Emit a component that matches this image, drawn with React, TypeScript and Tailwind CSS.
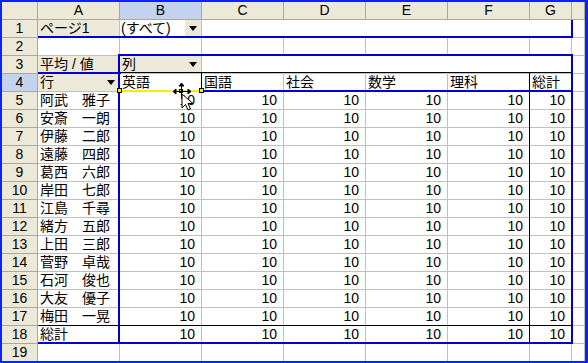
import React from "react";

const GRID = "border-r border-b border-[#c0c0c0]";
const CELL = "h-[18px] overflow-hidden whitespace-nowrap leading-[17px] text-[14px] flex items-center";

const names = [
  "阿武　雅子",
  "安斎　一朗",
  "伊藤　二郎",
  "遠藤　四郎",
  "葛西　六郎",
  "岸田　七郎",
  "江島　千尋",
  "緒方　五郎",
  "上田　三郎",
  "菅野　卓哉",
  "石河　俊也",
  "大友　優子",
  "梅田　一晃",
  "総計",
];

function Drop() {
  return (
    <span className="ml-auto w-[16px] h-[17px] bg-[#ece9d8] flex items-center justify-center shrink-0">
      <span className="w-0 h-0 border-l-[4px] border-r-[4px] border-t-[5px] border-l-transparent border-r-transparent border-t-black" />
    </span>
  );
}

function RowHead({ n, sel }: { n: number; sel?: boolean }) {
  return (
    <div
      className={`${CELL} justify-center border-r border-b border-[#aca899] ${
        sel ? "bg-[#c3d3ef]" : "bg-[#ece9d8]"
      }`}
    >
      {n}
    </div>
  );
}

function Num() {
  return <div className={`${CELL} ${GRID} justify-end pr-[6px]`}>10</div>;
}

export default function App() {
  const cols = ["A", "B", "C", "D", "E", "F", "G", ""];
  return (
    <div className="w-[588px] h-[363px] overflow-hidden bg-white border-l-2 border-t-2 border-r-[3px] border-b-2 border-[#0b24f0] text-black font-[family-name:'Liberation_Sans','Noto_Sans_CJK_JP',sans-serif]">
      <div className="relative grid grid-cols-[36px_82px_82px_82px_82px_82px_82px_42px_1fr] grid-rows-[repeat(20,18px)]">
        {/* header */}
        <div className={`${CELL} bg-[#ece9d8] border-r border-b border-[#aca899]`} />
        {cols.map((c, i) => (
          <div
            key={i}
            className={`${CELL} justify-center border-r border-b border-[#aca899] ${
              c === "B" ? "bg-[#c3d3ef]" : "bg-[#ece9d8]"
            }`}
          >
            {c}
          </div>
        ))}

        {/* row 1 */}
        <RowHead n={1} />
        <div className={`${CELL} ${GRID} bg-[#ece9d8] pl-[2px]`}>ページ1</div>
        <div className={`${CELL} ${GRID} pl-[1px]`}>
          <span>(すべて)</span>
          <Drop />
        </div>
        <div className={`${CELL} ${GRID} border-r-white`} />
        <div className={`${CELL} ${GRID} border-r-white`} />
        <div className={`${CELL} ${GRID} border-r-white`} />
        <div className={`${CELL} ${GRID} border-r-white`} />
        <div className={`${CELL} ${GRID}`} />
        <div className={`${CELL} ${GRID}`} />

        {/* row 2 */}
        <RowHead n={2} />
        {cols.map((_, i) => (
          <div key={i} className={`${CELL} ${GRID}`} />
        ))}

        {/* row 3 */}
        <RowHead n={3} />
        <div className={`${CELL} ${GRID} bg-[#ece9d8] pl-[2px]`}>平均 / 値</div>
        <div className={`${CELL} ${GRID} bg-[#ece9d8] pl-[2px]`}>
          <span>列</span>
          <Drop />
        </div>
        <div className={`${CELL} ${GRID} border-r-white`} />
        <div className={`${CELL} ${GRID} border-r-white`} />
        <div className={`${CELL} ${GRID} border-r-white`} />
        <div className={`${CELL} ${GRID} border-r-white`} />
        <div className={`${CELL} ${GRID}`} />
        <div className={`${CELL} ${GRID}`} />

        {/* row 4 */}
        <RowHead n={4} sel />
        <div className={`${CELL} ${GRID} bg-[#ece9d8] pl-[2px]`}>
          <span>行</span>
          <Drop />
        </div>
        <div className={`${CELL} ${GRID} pl-[2px]`}>英語</div>
        <div className={`${CELL} ${GRID} pl-[2px]`}>国語</div>
        <div className={`${CELL} ${GRID} pl-[2px]`}>社会</div>
        <div className={`${CELL} ${GRID} pl-[2px]`}>数学</div>
        <div className={`${CELL} ${GRID} pl-[2px]`}>理科</div>
        <div className={`${CELL} ${GRID} pl-[2px]`}>総計</div>
        <div className={`${CELL} ${GRID}`} />

        {/* rows 5-18 */}
        {names.map((nm, r) => (
          <React.Fragment key={r}>
            <RowHead n={r + 5} />
            <div className={`${CELL} ${GRID} pl-[2px]`}>{nm}</div>
            <Num />
            <Num />
            <Num />
            <Num />
            <Num />
            <Num />
            <div className={`${CELL} ${GRID}`} />
          </React.Fragment>
        ))}

        {/* row 19 */}
        <RowHead n={19} />
        {cols.map((_, i) => (
          <div key={i} className={`${CELL} ${GRID}`} />
        ))}

        {/* pivot outline overlays */}
        <div className="absolute left-[36px] top-[34px] w-[535px] h-[2px] bg-[#0000d0]" />
        <div className="absolute left-[569px] top-[18px] w-[2px] h-[18px] bg-[#0000d0]" />
        <div className="absolute left-[117px] top-[52px] w-[454px] h-[2px] bg-[#0000d0]" />
        <div className="absolute left-[36px] top-[70px] w-[83px] h-[2px] bg-[#0000d0]" />
        <div className="absolute left-[116px] top-[52px] w-[2px] h-[290px] bg-[#0000d0]" />
        <div className="absolute left-[569px] top-[52px] w-[2px] h-[290px] bg-[#0000d0]" />
        <div className="absolute left-[200px] top-[88px] w-[371px] h-[2px] bg-[#0000d0]" />
        <div className="absolute left-[36px] top-[340px] w-[535px] h-[2px] bg-[#0000d0]" />

        {/* black lines */}
        <div className="absolute left-[118px] top-[70px] w-[451px] h-[1px] bg-black" />
        <div className="absolute left-[199px] top-[70px] w-[1px] h-[19px] bg-black" />
        <div className="absolute left-[527px] top-[70px] w-[1px] h-[271px] bg-black" />
        <div className="absolute left-[36px] top-[323px] w-[535px] h-[1px] bg-black" />

        {/* yellow drag indicator */}
        <div className="absolute left-[117px] top-[88px] w-[85px] h-[2px] bg-[#f0f000]" />
        <div className="absolute left-[115px] top-[86px] w-[5px] h-[5px] bg-[#f0f000] border border-black" />
        <div className="absolute left-[197px] top-[86px] w-[5px] h-[5px] bg-[#f0f000] border border-black" />
        <div className="absolute left-[177px] top-[87px] w-[4px] h-[4px] bg-[#f0f000] border border-black" />

        {/* cursor */}
        <svg
          className="absolute left-[170px] top-[80px]"
          width="26"
          height="30"
          viewBox="0 0 26 30"
        >
          <g stroke="black" strokeWidth="1" fill="black">
            <line x1="2" y1="9.5" x2="18" y2="9.5" />
            <line x1="9.5" y1="2" x2="9.5" y2="17" />
            <polygon points="1,9.5 4,7 4,12" />
            <polygon points="19,9.5 16,7 16,12" />
            <polygon points="9.5,1 7,4 12,4" />
          </g>
          <polygon
            points="10,12 10,26 13.5,22.5 16,28 18.5,27 16,21.5 21,21.5"
            fill="white"
            stroke="black"
            strokeWidth="1"
            strokeLinejoin="miter"
          />
        </svg>
      </div>
    </div>
  );
}
